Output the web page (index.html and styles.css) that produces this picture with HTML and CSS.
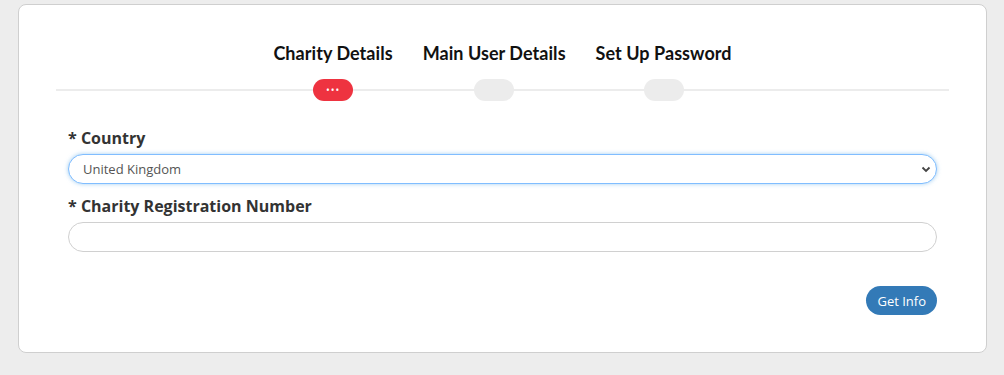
FILE: index.html
```html
<!DOCTYPE html>
<html lang="en">
<head>
    <meta charset="UTF-8">
    <meta name="viewport" content="width=device-width, initial-scale=1.0">
    <title>Charity Registration</title>
    <link rel="stylesheet" href="styles.css">
</head>
<body>

    <div class="card">
        <div class="steps">
            <div class="step active">
                <span class="step-title">Charity Details</span>
                <span class="step-pill">&bull;&bull;&bull;</span>
            </div>
            <div class="step">
                <span class="step-title">Main User Details</span>
                <span class="step-pill"></span>
            </div>
            <div class="step">
                <span class="step-title">Set Up Password</span>
                <span class="step-pill"></span>
            </div>
        </div>

        <form class="form">
            <div class="field">
                <label for="country">* Country</label>
                <div class="select-wrap">
                    <select id="country" class="control focused">
                        <option>United Kingdom</option>
                    </select>
                    <svg class="caret" width="10" height="7" viewBox="0 0 10 7"><path d="M1.5 1.5 L5 5 L8.5 1.5" fill="none" stroke="#444" stroke-width="1.8"/></svg>
                </div>
            </div>
            <div class="field">
                <label for="regnum">* Charity Registration Number</label>
                <input type="text" id="regnum" class="control">
            </div>
            <div class="actions">
                <button type="button" class="btn">Get Info</button>
            </div>
        </form>
    </div>

</body>
</html>
```

FILE: styles.css
```css
* {
    margin: 0;
    padding: 0;
    box-sizing: border-box;
}
body {
    font-family: 'Open Sans', sans-serif;
    background-color: #ededed;
    padding: 4px 17px 0 18px;
}
.card {
    height: 349px;
    background-color: #fff;
    border: 1px solid #cfcfcf;
    border-radius: 8px;
    padding: 37px 37px 0 37px;
}
.steps {
    position: relative;
    display: flex;
    justify-content: center;
    gap: 30px;
}
.steps::before {
    content: '';
    position: absolute;
    left: 0;
    right: 0;
    top: 47px;
    height: 2px;
    background-color: #ececec;
}
.step {
    position: relative;
    display: flex;
    flex-direction: column;
    align-items: center;
}
.step-title {
    font-family: 'Lato', sans-serif;
    font-weight: 700;
    font-size: 18px;
    letter-spacing: 0.05px;
    line-height: 22px;
    color: #111;
    white-space: nowrap;
}
.step-pill {
    margin-top: 15px;
    width: 40px;
    height: 22px;
    border-radius: 11px;
    background-color: #ececec;
    color: #fff;
    font-size: 10px;
    line-height: 22px;
    text-align: center;
    letter-spacing: 1px;
}
.step.active .step-pill {
    background-color: #ee3340;
}
.form {
    padding: 25px 12px 0 12px;
}
.field {
    margin-bottom: 10px;
}
.field label {
    display: block;
    font-weight: 700;
    font-size: 16px;
    line-height: 24px;
    color: #333;
    margin-bottom: 4px;
}
.select-wrap {
    position: relative;
}
.control {
    display: block;
    width: 100%;
    height: 30px;
    border: 1px solid #d0d0d0;
    border-radius: 15px;
    background-color: #fff;
    padding: 0 14px;
    font-family: 'Open Sans', sans-serif;
    font-size: 13px;
    color: #555;
    outline: none;
    appearance: none;
}
.control.focused {
    border-color: #80bdff;
    box-shadow: 0 0 4px rgba(102, 175, 233, 0.6);
}
.caret {
    position: absolute;
    right: 6px;
    top: 12px;
}
.actions {
    display: flex;
    justify-content: flex-end;
    padding-top: 24px;
}
.btn {
    height: 29px;
    padding: 0 11px;
    border: none;
    border-radius: 15px;
    background-color: #337ab7;
    color: #fff;
    font-family: 'Open Sans', sans-serif;
    font-size: 13px;
    cursor: pointer;
}
```
